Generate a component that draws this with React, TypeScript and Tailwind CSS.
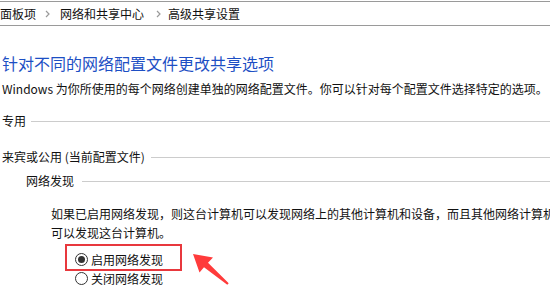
import React from "react";

const Chevron = () => (
  <svg width="5" height="8" viewBox="0 0 5 8" className="shrink-0">
    <path d="M1 1 L4 4 L1 7" fill="none" stroke="#9a9a9a" strokeWidth="1.2" />
  </svg>
);

const Radio = ({ checked, label }: { checked?: boolean; label: string }) => (
  <div className="flex h-[19px] items-center">
    <div className="ml-[75px] flex h-[13px] w-[13px] items-center justify-center rounded-full border border-[#333333] bg-white">
      {checked && <div className="h-[7px] w-[7px] rounded-full bg-[#333333]" />}
    </div>
    <span className="ml-[3px]">{label}</span>
  </div>
);

export default function App() {
  return (
    <div
      className="relative h-[290px] w-[550px] overflow-hidden bg-white text-[12px] leading-[18px] text-[#111111]"
      style={{ fontFamily: '"Noto Sans CJK SC", "Microsoft YaHei", sans-serif' }}
    >
      <div className="h-[1px]" />
      <div className="flex h-[25px] items-center border-y border-[#9a9a9a] whitespace-nowrap">
        <span>面板项</span>
        <span className="ml-[9px] mr-[10px] flex items-center">
          <Chevron />
        </span>
        <span>网络和共享中心</span>
        <span className="ml-[12px] mr-[7px] flex items-center">
          <Chevron />
        </span>
        <span>高级共享设置</span>
      </div>

      <div className="mt-[26px] flex h-[22px] items-center pl-[2px] text-[16px] leading-[22px] text-[#1d4fc4] whitespace-nowrap">
        针对不同的网络配置文件更改共享选项
      </div>

      <div className="mt-[6px] flex h-[18px] items-center pl-[2px] whitespace-nowrap">
        Windows 为你所使用的每个网络创建单独的网络配置文件。你可以针对每个配置文件选择特定的选项。
      </div>

      <div className="mt-[14px] flex h-[18px] items-center pl-[2px]">
        <span className="shrink-0">专用</span>
        <div className="ml-[5px] h-px flex-1 bg-[#cccccc]" />
      </div>

      <div className="mt-[18px] flex h-[18px] items-center pl-[2px]">
        <span className="shrink-0 whitespace-nowrap">来宾或公用 (当前配置文件)</span>
        <div className="ml-[6px] h-px flex-1 bg-[#cccccc]" />
      </div>

      <div className="mt-[6px] flex h-[18px] items-center pl-[26px]">
        <span className="shrink-0">网络发现</span>
        <div className="ml-[8px] h-px flex-1 bg-[#cccccc]" />
      </div>

      <div className="mt-[14px] pl-[51px] leading-[19px] whitespace-nowrap">
        如果已启用网络发现，则这台计算机可以发现网络上的其他计算机和设备，而且其他网络计算机
        <br />
        可以发现这台计算机。
      </div>

      <div className="mt-[8px]">
        <Radio checked label="启用网络发现" />
        <Radio label="关闭网络发现" />
      </div>

      <div className="pointer-events-none absolute left-[65px] top-[244px] h-[27px] w-[117px] border-2 border-[#e8383d]" />

      <svg
        className="pointer-events-none absolute left-[185px] top-[248px]"
        width="50"
        height="42"
        viewBox="0 0 50 42"
      >
        <polygon
          points="8,6 28,9.5 23,14.7 43.7,35.2 42.3,36.8 19,19.3 14.5,24.6"
          fill="#ff3b3b"
        />
      </svg>
    </div>
  );
}
